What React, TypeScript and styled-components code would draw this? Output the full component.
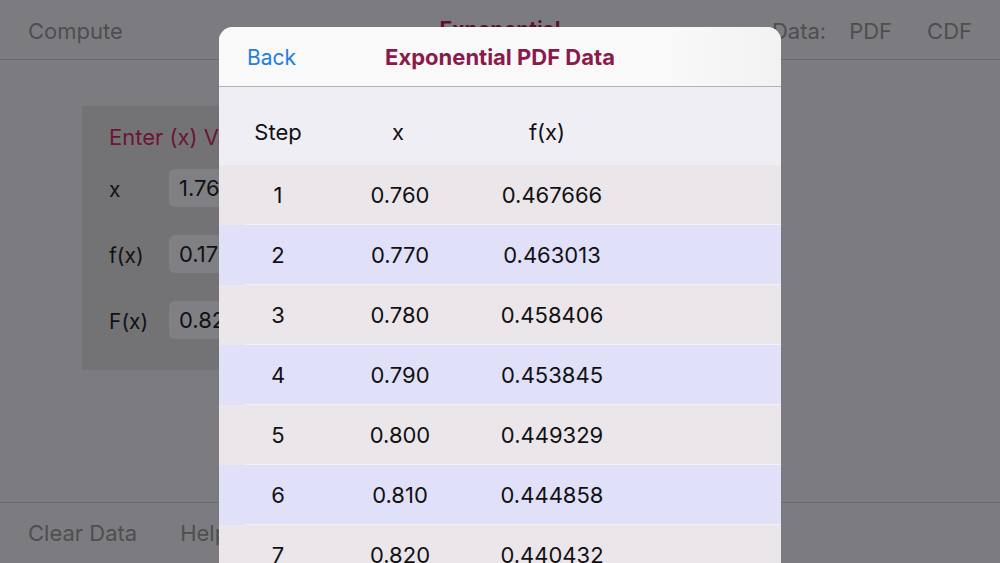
import React from "react";
import styled, { createGlobalStyle } from "styled-components";

const GlobalStyle = createGlobalStyle`
  html, body {
    margin: 0;
    padding: 0;
  }
  body {
    font-family: Inter, "Noto Sans", "Liberation Sans", sans-serif;
    -webkit-font-smoothing: antialiased;
  }
`;

const rows = [
  { step: 1, x: "0.760", fx: "0.467666" },
  { step: 2, x: "0.770", fx: "0.463013" },
  { step: 3, x: "0.780", fx: "0.458406" },
  { step: 4, x: "0.790", fx: "0.453845" },
  { step: 5, x: "0.800", fx: "0.449329" },
  { step: 6, x: "0.810", fx: "0.444858" },
  { step: 7, x: "0.820", fx: "0.440432" },
];

const fields = [
  { label: "x", value: "1.76" },
  { label: "f(x)", value: "0.17" },
  { label: "F(x)", value: "0.82" },
];

const App = () => {
  return (
    <>
      <GlobalStyle />
      <Screen>
        {/* calculator screen, dimmed behind the sheet */}
        <TopBar>
          <BarItem>Compute</BarItem>
          <ScreenTitle>Exponential</ScreenTitle>
          <BarGroup>
            <BarItem>Data:</BarItem>
            <BarItem>PDF</BarItem>
            <BarItem $gapLeft={12}>CDF</BarItem>
          </BarGroup>
        </TopBar>

        <Main>
          <InputPanel>
            <PanelTitle>Enter (x) Value</PanelTitle>
            {fields.map((f) => (
              <FieldRow key={f.label}>
                <FieldLabel>{f.label}</FieldLabel>
                <FieldBox>{f.value}</FieldBox>
              </FieldRow>
            ))}
          </InputPanel>
        </Main>

        <BottomBar>
          <BarItem>Clear Data</BarItem>
          <BarItem>Help</BarItem>
        </BottomBar>

        <Sheet>
          <SheetHeader>
            <BackButton>Back</BackButton>
            <SheetTitle>Exponential PDF Data</SheetTitle>
          </SheetHeader>
          <TableHead>
            <Cell>Step</Cell>
            <Cell $shift={-2}>x</Cell>
            <Cell $shift={-5}>f(x)</Cell>
          </TableHead>
          {rows.map((r, i) => (
            <Row key={r.step} $odd={i % 2 === 0}>
              <Cell>{r.step}</Cell>
              <Cell>{r.x}</Cell>
              <Cell>{r.fx}</Cell>
            </Row>
          ))}
        </Sheet>
      </Screen>
    </>
  );
};

const Screen = styled.div`
  position: relative;
  width: 1000px;
  height: 563px;
  overflow: hidden;
  background-color: #7c7c80;
  display: flex;
  flex-direction: column;
`;

const TopBar = styled.div`
  height: 60px;
  flex-shrink: 0;
  box-sizing: border-box;
  border-bottom: 1px solid #6b6b6e;
  display: flex;
  align-items: center;
  justify-content: space-between;
  padding: 2px 28px 0 28px;
  position: relative;
`;

const BarGroup = styled.div`
  display: flex;
  gap: 23px;
`;

const BarItem = styled.div<{ $gapLeft?: number }>`
  font-size: 22px;
  color: #4e4e51;
  margin-left: ${(p) => p.$gapLeft ?? 0}px;
`;

const ScreenTitle = styled.div`
  position: absolute;
  left: 0;
  right: 0;
  top: 17px;
  text-align: center;
  font-size: 21px;
  font-weight: 700;
  color: #5c1030;
`;

const Main = styled.div`
  flex: 1;
  padding: 46px 0 0 82px;
`;

/* only the left part of the panel shows beside the sheet */
const InputPanel = styled.div`
  width: 137px;
  height: 264px;
  overflow: hidden;
  box-sizing: border-box;
  background-color: #737376;
  padding: 18px 0 0 27px;
  display: flex;
  flex-direction: column;
  gap: 28px;
`;

const PanelTitle = styled.div`
  font-size: 22px;
  color: #6c1535;
  white-space: nowrap;
  margin-bottom: -9px;
`;

const FieldRow = styled.div`
  display: flex;
  align-items: center;
  height: 38px;
`;

const FieldLabel = styled.div`
  width: 60px;
  flex-shrink: 0;
  font-size: 21px;
  color: #111114;
  padding-top: 2px;
`;

const FieldBox = styled.div`
  width: 120px;
  flex-shrink: 0;
  height: 38px;
  box-sizing: border-box;
  border-radius: 6px;
  background-color: #808084;
  padding-left: 10px;
  display: flex;
  align-items: center;
  font-size: 22px;
  color: #111114;
`;

const BottomBar = styled.div`
  height: 61px;
  box-sizing: border-box;
  border-top: 1px solid #6b6b6e;
  display: flex;
  align-items: center;
  gap: 43px;
  padding: 0 28px;
`;

const Sheet = styled.div`
  position: absolute;
  left: 219px;
  top: 27px;
  width: 562px;
  bottom: -40px;
  border-radius: 14px 14px 0 0;
  overflow: hidden;
  background-color: #efeef4;
`;

const SheetHeader = styled.div`
  height: 60px;
  box-sizing: border-box;
  border-bottom: 1px solid #b3b3b6;
  background: linear-gradient(90deg, #f9f9f9 80%, #f2f2f3 100%);
  display: flex;
  align-items: center;
  justify-content: center;
  position: relative;
`;

const BackButton = styled.div`
  position: absolute;
  left: 28px;
  top: 18px;
  font-size: 21px;
  color: #1f7ee0;
`;

const SheetTitle = styled.div`
  font-size: 22px;
  font-weight: 700;
  color: #8a1a4c;
  padding-top: 1px;
`;

const grid = `
  display: grid;
  grid-template-columns: 118px 126px 178px 1fr;
  align-items: center;
`;

const TableHead = styled.div`
  ${grid}
  height: 78px;
  padding-top: 11px;
  box-sizing: border-box;
  background-color: #efeef4;
`;

const Row = styled.div<{ $odd: boolean }>`
  ${grid}
  position: relative;
  height: 60px;
  background-color: ${(p) => (p.$odd ? "#ebe6ea" : "#e0e0f8")};

  &::after {
    content: "";
    position: absolute;
    left: 26px;
    right: 0;
    bottom: 0;
    height: 1px;
    background-color: #f3f1f5;
  }
`;

const Cell = styled.div<{ $shift?: number }>`
  text-align: center;
  font-size: 22px;
  color: #111114;
  transform: translateX(${(p) => p.$shift ?? 0}px);
`;

export default App;
